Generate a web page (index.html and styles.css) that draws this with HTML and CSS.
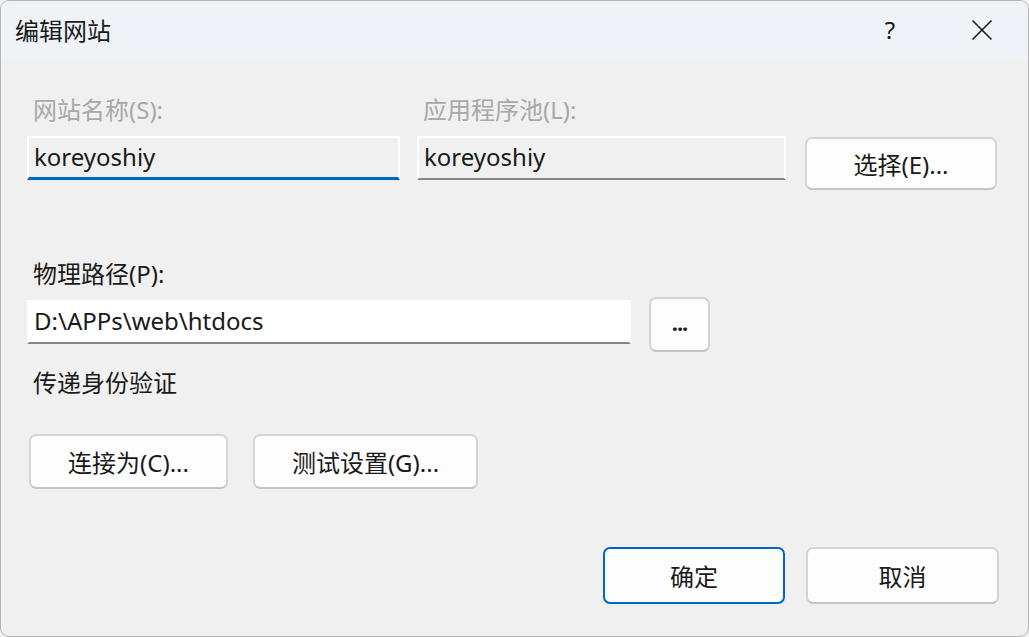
FILE: index.html
```html
<!DOCTYPE html>
<html lang="zh-CN">
<head>
<meta charset="utf-8">
<title>编辑网站</title>
<link rel="stylesheet" href="styles.css">
</head>
<body>
<div class="window">
  <div class="titlebar">
    <span class="title">编辑网站</span>
    <span class="help">?</span>
    <span class="close">
      <svg width="22" height="22" viewBox="0 0 22 22"><path d="M1.5 1.5 L20.5 20.5 M20.5 1.5 L1.5 20.5" stroke="#1a1a1a" stroke-width="1.6" fill="none"/></svg>
    </span>
  </div>
  <div class="content">
    <div class="row1">
      <div class="col col-name">
        <div class="label disabled">网站名称(S):</div>
        <div class="textbox focused">koreyoshiy</div>
      </div>
      <div class="col col-pool">
        <div class="label disabled">应用程序池(L):</div>
        <div class="textbox readonly">koreyoshiy</div>
      </div>
      <button class="btn btn-select">选择(E)...</button>
    </div>

    <div class="label label-path">物理路径(P):</div>
    <div class="row-path">
      <div class="textbox path">D:\APPs\web\htdocs</div>
      <button class="btn btn-browse">...</button>
    </div>

    <div class="label label-auth">传递身份验证</div>
    <div class="row-auth">
      <button class="btn btn-connect">连接为(C)...</button>
      <button class="btn btn-test">测试设置(G)...</button>
    </div>

    <div class="footer">
      <button class="btn btn-ok">确定</button>
      <button class="btn btn-cancel">取消</button>
    </div>
  </div>
</div>
</body>
</html>
```

FILE: styles.css
```css
* { box-sizing: border-box; }
html, body {
  margin: 0;
  padding: 0;
  width: 1029px;
  height: 637px;
  overflow: hidden;
  background: #f0f0f0;
}
body {
  font-family: "Noto Sans", "Noto Sans CJK SC", sans-serif;
  font-size: 24px;
  color: #1a1a1a;
}
.window {
  width: 1029px;
  height: 637px;
  border: 1px solid #b4b4b4;
  border-radius: 9px;
  background: #f0f0f0;
  overflow: hidden;
  display: flex;
  flex-direction: column;
}
.titlebar {
  height: 59px;
  flex: none;
  background: #eff3f8;
  display: flex;
  align-items: center;
  padding-left: 14px;
  padding-bottom: 2px;
}
.title {
  flex: 1;
  font-size: 24px;
}
.help {
  width: 22px;
  text-align: center;
  font-size: 24px;
  margin-right: 70px;
}
.close {
  width: 22px;
  height: 22px;
  margin-right: 35px;
  display: flex;
}
.content {
  flex: 1;
  padding-left: 26px;
  display: flex;
  flex-direction: column;
}
.label {
  line-height: 30px;
  height: 30px;
  padding-left: 6px;
  white-space: nowrap;
}
.disabled { color: #a8a8a8; }
.row1 {
  display: flex;
  align-items: flex-start;
  margin-top: 35px;
}
.col {
  display: flex;
  flex-direction: column;
}
.col .label { margin-bottom: 11px; }
.col-name { width: 373px; }
.col-pool { width: 369px; margin-left: 17px; }
.textbox {
  height: 44px;
  line-height: 38px;
  padding-left: 5px;
  border: 2px solid #ffffff;
  border-bottom: 2px solid #868686;
  background: #f0f0f0;
  white-space: nowrap;
}
.textbox.focused {
  border-bottom: 3px solid #0067c0;
}
.btn {
  font-family: "Noto Sans", "Noto Sans CJK SC", sans-serif;
  font-size: 24px;
  color: #1a1a1a;
  background: #fdfdfd;
  border: 2px solid #d4d4d4;
  border-bottom-color: #c4c4c4;
  border-radius: 7px;
  padding: 0;
  display: flex;
  align-items: center;
  justify-content: center;
  flex: none;
}
.btn-select {
  width: 192px;
  height: 53px;
  margin-top: 42px;
  margin-left: 19px;
}
.label-path { margin-top: 69px; }
.row-path {
  display: flex;
  align-items: flex-start;
  margin-top: 8px;
}
.textbox.path {
  width: 604px;
  background: #ffffff;
  margin-top: 3px;
}
.btn-browse {
  width: 61px;
  height: 55px;
  margin-left: 18px;
  font-size: 22px;
  font-weight: 700;
  padding-bottom: 6px;
  letter-spacing: -1px;
}
.label-auth { margin-top: 16px; }
.row-auth {
  display: flex;
  margin-top: 36px;
  padding-left: 2px;
}
.btn-connect { width: 199px; height: 55px; }
.btn-test { width: 225px; height: 55px; margin-left: 25px; }
.footer {
  display: flex;
  justify-content: flex-end;
  margin-top: 58px;
  padding-right: 29px;
}
.btn-ok {
  width: 182px;
  height: 57px;
  border: 2px solid #0067c0;
}
.btn-cancel {
  width: 193px;
  height: 57px;
  margin-left: 21px;
}
```
